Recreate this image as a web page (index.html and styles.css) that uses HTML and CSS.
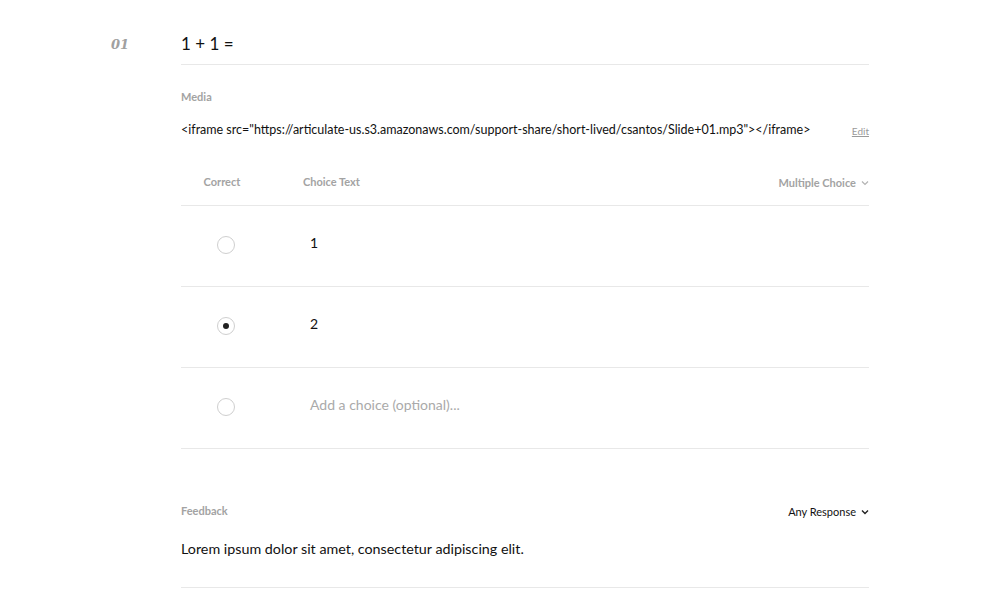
FILE: index.html
```html
<!DOCTYPE html>
<html>
<head>
<meta charset="utf-8">
<link rel="stylesheet" href="styles.css">
</head>
<body>
<div class="page">
  <div class="num">01</div>
  <div class="main">
    <div class="title">1 + 1 =</div>
    <div class="label media-label">Media</div>
    <div class="media-row">
      <span class="media-text">&lt;iframe src="https://articulate-us.s3.amazonaws.com/support-share/short-lived/csantos/Slide+01.mp3"&gt;&lt;/iframe&gt;</span>
      <span class="edit">Edit</span>
    </div>
    <div class="choice-head">
      <span class="label col-correct">Correct</span>
      <span class="label col-text">Choice Text</span>
      <span class="label type">Multiple Choice
        <svg class="chev" width="8" height="6" viewBox="0 0 8 6"><path d="M1 1.5 L4 4.5 L7 1.5" fill="none" stroke="#b3b3b3" stroke-width="1.2"/></svg>
      </span>
    </div>
    <div class="choice">
      <span class="radio-cell"><span class="radio"></span></span>
      <span class="choice-text">1</span>
    </div>
    <div class="choice">
      <span class="radio-cell"><span class="radio checked"></span></span>
      <span class="choice-text">2</span>
    </div>
    <div class="choice">
      <span class="radio-cell"><span class="radio"></span></span>
      <span class="choice-text placeholder">Add a choice (optional)...</span>
    </div>
    <div class="feedback-head">
      <span class="label">Feedback</span>
      <span class="any">Any Response
        <svg class="chev" width="8" height="6" viewBox="0 0 8 6"><path d="M1 1.5 L4 4.5 L7 1.5" fill="none" stroke="#222" stroke-width="1.4"/></svg>
      </span>
    </div>
    <div class="feedback-text">Lorem ipsum dolor sit amet, consectetur adipiscing elit.</div>
  </div>
</div>
</body>
</html>
```

FILE: styles.css
```css
html, body {
  margin: 0;
  padding: 0;
  background: #fff;
}
body {
  font-family: Lato, "Noto Sans", sans-serif;
  color: #111;
}
.page {
  display: grid;
  grid-template-columns: 70px 688px;
  padding-left: 111px;
}
.num {
  font-family: "DejaVu Serif", "Liberation Serif", serif;
  font-style: italic;
  font-weight: bold;
  font-size: 13px;
  color: #a0a0a0;
  padding-top: 37px;
  line-height: 16px;
}
.title {
  font-size: 17px;
  line-height: 22px;
  padding-top: 33px;
  padding-bottom: 9px;
  border-bottom: 1px solid #e8e8e8;
}
.label {
  font-size: 11px;
  font-weight: bold;
  color: #a3a3a3;
  line-height: 14px;
}
.media-label {
  display: block;
  margin-top: 25px;
}
.media-row {
  display: flex;
  justify-content: space-between;
  align-items: flex-end;
  margin-top: 18px;
  line-height: 16px;
}
.media-text {
  font-size: 12.5px;
  color: #111;
}
.edit {
  font-size: 10px;
  color: #9a9a9a;
  text-decoration: underline;
  line-height: 14px;
}
.choice-head {
  display: flex;
  align-items: center;
  padding-top: 36px;
  padding-bottom: 15px;
  border-bottom: 1px solid #e8e8e8;
}
.col-correct {
  width: 82px;
  text-align: center;
}
.col-text {
  margin-left: 40px;
}
.type {
  margin-left: auto;
  display: flex;
  align-items: center;
  gap: 5px;
  padding-top: 2px;
}
.chev {
  display: block;
}
.choice {
  display: flex;
  align-items: center;
  height: 80px;
  border-bottom: 1px solid #e8e8e8;
}
.radio-cell {
  width: 90px;
  display: flex;
  justify-content: center;
  margin-bottom: 3px;
}
.radio {
  width: 16px;
  height: 16px;
  border: 1px solid #cfcfcf;
  border-radius: 50%;
  display: flex;
  align-items: center;
  justify-content: center;
}
.radio.checked::after {
  content: "";
  width: 6px;
  height: 6px;
  border-radius: 50%;
  background: #222;
}
.choice-text {
  margin-left: 39px;
  font-size: 14px;
  line-height: 20px;
  margin-bottom: 7px;
}
.choice-text.placeholder {
  color: #aaa;
}
.feedback-head {
  display: flex;
  justify-content: space-between;
  align-items: center;
  margin-top: 54px;
}
.any {
  font-size: 11px;
  color: #111;
  display: flex;
  align-items: center;
  gap: 5px;
  padding-top: 2px;
}
.feedback-text {
  font-size: 14.3px;
  line-height: 20px;
  margin-top: 21px;
  padding-bottom: 28px;
  border-bottom: 1px solid #e8e8e8;
}
```
